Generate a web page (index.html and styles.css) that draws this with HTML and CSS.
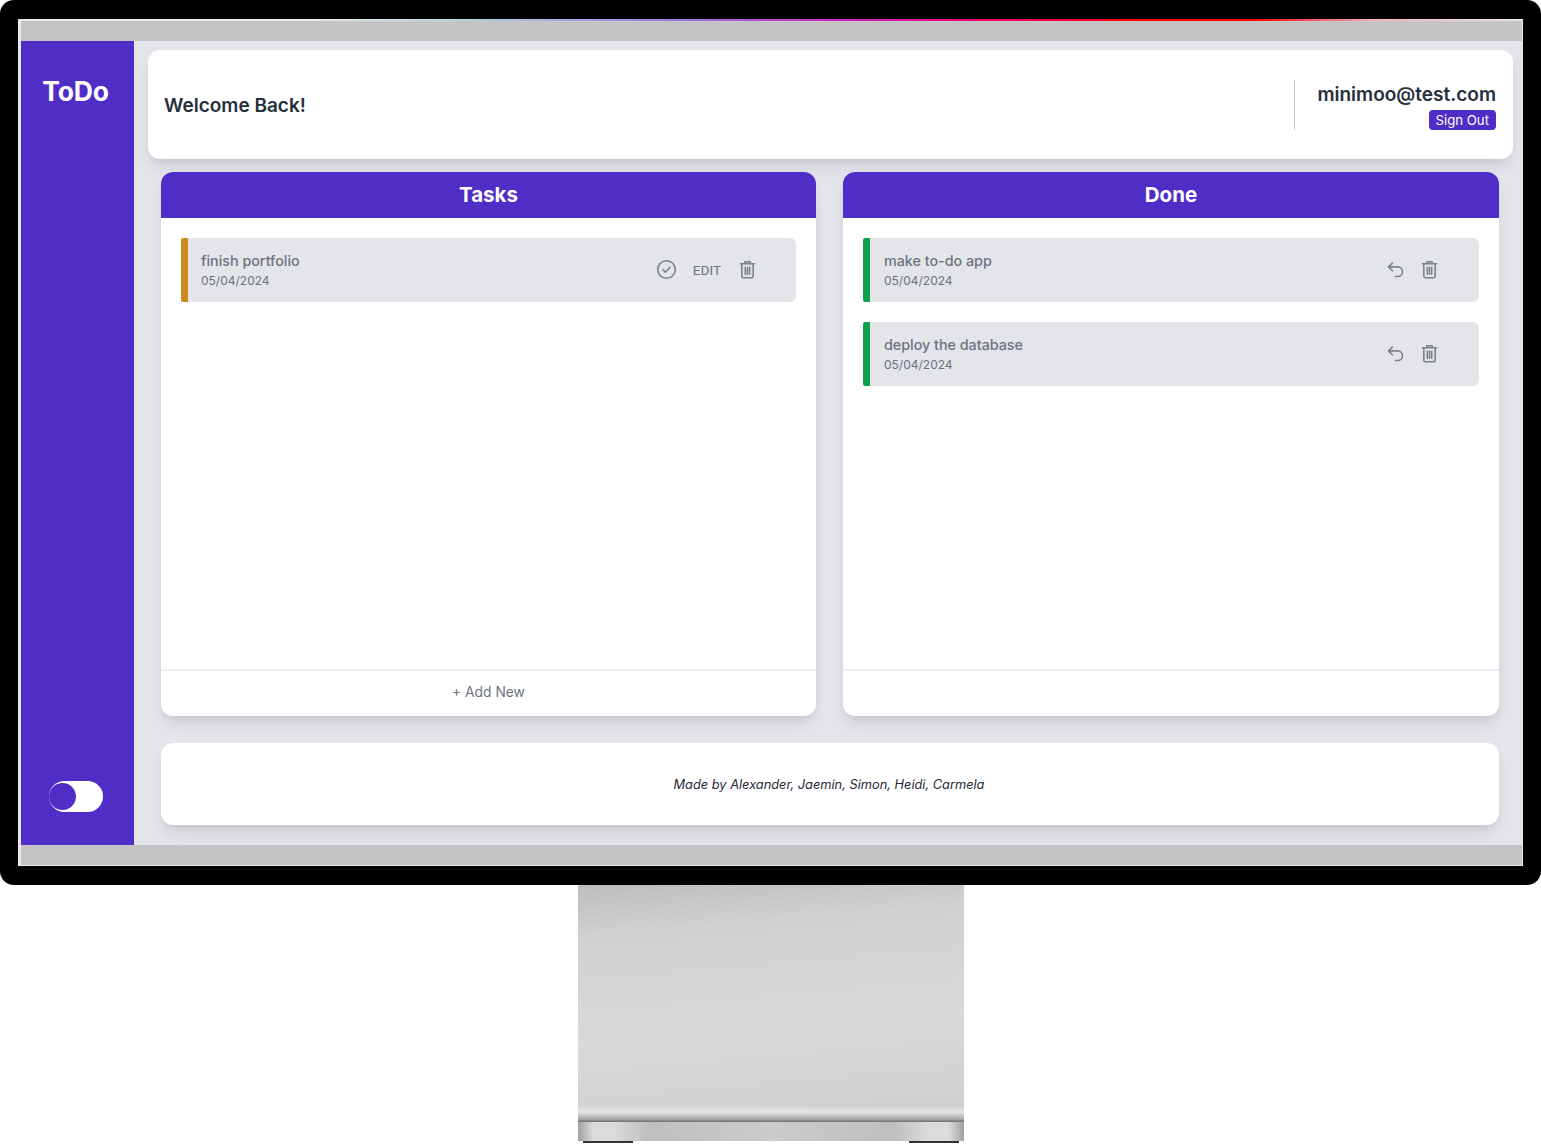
FILE: index.html
```html
<!DOCTYPE html>
<html lang="en">
<head>
    <meta charset="UTF-8">
    <meta name="viewport" content="width=device-width, initial-scale=1.0">
    <title>ToDo</title>
    <link rel="stylesheet" href="styles.css">
</head>
<body>
    <div class="monitor">
        <div class="screen">
            <div class="glow"></div>
            <div class="screen-bar"></div>
            <div class="app">
                <aside class="sidebar">
                    <div class="logo">ToDo</div>
                    <div class="toggle"><span class="knob"></span></div>
                </aside>
                <main class="content">
                    <header class="topbar">
                        <h1 class="welcome">Welcome Back!</h1>
                        <div class="account">
                            <div class="email">minimoo@test.com</div>
                            <button class="signout">Sign Out</button>
                        </div>
                    </header>

                    <div class="columns">
                        <section class="column">
                            <h2 class="column-title">Tasks</h2>
                            <div class="column-body">
                                <div class="task task-open">
                                    <div class="task-text">
                                        <div class="task-name">finish portfolio</div>
                                        <div class="task-date">05/04/2024</div>
                                    </div>
                                    <div class="task-actions actions-open">
                                        <svg class="icon" viewBox="0 0 24 24"><circle cx="12" cy="12" r="10"/><path d="M8 12.300l2.800 2.800 5.200-5.600"/></svg>
                                        <span class="edit">EDIT</span>
                                        <svg class="icon" viewBox="0 0 24 24"><path d="M4 5.500h16M9 5.500V3.200h6v2.300M5.500 5.500v14.200c0 1 .8 1.800 1.800 1.800h9.400c1 0 1.800-.8 1.800-1.800V5.500M9.500 9.500v8M12 9.500v8M14.500 9.500v8"/></svg>
                                    </div>
                                </div>
                            </div>
                            <div class="column-foot">+ Add New</div>
                        </section>

                        <section class="column">
                            <h2 class="column-title">Done</h2>
                            <div class="column-body">
                                <div class="task task-done">
                                    <div class="task-text">
                                        <div class="task-name">make to-do app</div>
                                        <div class="task-date">05/04/2024</div>
                                    </div>
                                    <div class="task-actions actions-done">
                                        <svg class="icon" viewBox="0 0 24 24"><path d="M8.500 4.500L4 9l4.500 4.500M4 9h10.500a5.500 5.500 0 0 1 0 11H12"/></svg>
                                        <svg class="icon" viewBox="0 0 24 24"><path d="M4 5.500h16M9 5.500V3.200h6v2.300M5.500 5.500v14.200c0 1 .8 1.800 1.800 1.800h9.400c1 0 1.800-.8 1.800-1.800V5.500M9.500 9.500v8M12 9.500v8M14.500 9.500v8"/></svg>
                                    </div>
                                </div>
                                <div class="task task-done">
                                    <div class="task-text">
                                        <div class="task-name">deploy the database</div>
                                        <div class="task-date">05/04/2024</div>
                                    </div>
                                    <div class="task-actions actions-done">
                                        <svg class="icon" viewBox="0 0 24 24"><path d="M8.500 4.500L4 9l4.500 4.500M4 9h10.500a5.500 5.500 0 0 1 0 11H12"/></svg>
                                        <svg class="icon" viewBox="0 0 24 24"><path d="M4 5.500h16M9 5.500V3.200h6v2.300M5.500 5.500v14.200c0 1 .8 1.800 1.800 1.800h9.400c1 0 1.800-.8 1.800-1.800V5.500M9.500 9.500v8M12 9.500v8M14.500 9.500v8"/></svg>
                                    </div>
                                </div>
                            </div>
                            <div class="column-foot"></div>
                        </section>
                    </div>

                    <footer class="credits">Made by Alexander, Jaemin, Simon, Heidi, Carmela</footer>
                </main>
            </div>
            <div class="screen-bar"></div>
        </div>
    </div>
    <div class="stand">
        <div class="stand-lip"></div>
        <div class="stand-base"></div>
        <div class="stand-feet"><span class="foot"></span><span class="foot"></span></div>
    </div>
</body>
</html>
```

FILE: styles.css
```css
* {
    box-sizing: border-box;
    margin: 0;
    padding: 0;
}

html, body {
    height: 1144px;
    overflow: hidden;
    background-color: white;
}

body {
    font-family: Inter, "Liberation Sans", sans-serif;
    color: #1f2937;
}

/* monitor frame */
.monitor {
    height: 885px;
    padding: 19px 18px;
    background-color: black;
    border-radius: 14px;
}

.screen {
    position: relative;
    height: 847px;
    width: 1505px;
    display: flex;
    flex-direction: column;
    padding: 2px 1px 1px 3px;
    background-color: #e8e8f0;
}

.glow {
    position: absolute;
    top: 0;
    left: 0;
    right: 0;
    height: 2px;
    background: linear-gradient(90deg, #e8e8e8 0%, #e8e8e8 20%, #a8d4e0 30%, #a070e0 45%, #d020c0 55%, #f00060 66%, #ff0000 75%, #ff0000 82%, #f0b0b8 90%, #e8e8e8 100%);
}

.screen-bar {
    height: 20px;
    flex-shrink: 0;
    background-color: #c4c4c4;
}

.app {
    flex: 1;
    display: flex;
    min-height: 0;
    background-color: #e4e5ea;
}

/* sidebar */
.sidebar {
    width: 113px;
    flex-shrink: 0;
    display: flex;
    flex-direction: column;
    align-items: center;
    justify-content: space-between;
    padding: 32px 4px 33px 0;
    background-color: #4f2dc7;
}

.logo {
    font-size: 26.500px;
    font-weight: 700;
    line-height: 36px;
    color: white;
    letter-spacing: -0.2px;
}

.toggle {
    width: 54px;
    height: 31px;
    margin-left: 1px;
    border-radius: 16px;
    background-color: white;
    padding: 2px 0 0;
}

.knob {
    display: block;
    width: 27px;
    height: 27px;
    border-radius: 50%;
    background-color: #4f2dc7;
}

/* main area */
.content {
    flex: 1;
    display: flex;
    flex-direction: column;
    padding: 9px 9px 20px 14px;
}

.topbar {
    height: 109px;
    flex-shrink: 0;
    display: flex;
    align-items: center;
    justify-content: space-between;
    padding: 0 17px 0 16px;
    background-color: white;
    border-radius: 12px;
    box-shadow: 0 10px 15px -3px rgba(0, 0, 0, 0.1), 0 4px 6px -2px rgba(0, 0, 0, 0.05);
}

.welcome {
    font-size: 19px;
    font-weight: 600;
    line-height: 30px;
    padding-top: 3px;
    color: #252f3d;
}

.account {
    height: 50px;
    display: flex;
    flex-direction: column;
    align-items: flex-end;
    justify-content: space-between;
    width: 202px;
    border-left: 1px solid #c9c9d0;
}

.email {
    font-size: 19px;
    font-weight: 600;
    line-height: 28px;
    padding-top: 1px;
    color: #252f3d;
}

.signout {
    height: 20px;
    padding: 0 7px;
    border: none;
    border-radius: 4px;
    font-family: Inter, sans-serif;
    font-size: 13.200px;
    color: white;
    background-color: #4f2dc7;
}

.columns {
    display: grid;
    grid-template-columns: 655px 656px;
    gap: 27px;
    margin: 13px 14px 0 13px;
    height: 544px;
    flex-shrink: 0;
}

.column {
    display: flex;
    flex-direction: column;
    background-color: white;
    border-radius: 12px;
    box-shadow: 0 10px 15px -3px rgba(0, 0, 0, 0.1), 0 4px 6px -2px rgba(0, 0, 0, 0.05);
    overflow: hidden;
}

.column-title {
    height: 46px;
    flex-shrink: 0;
    display: flex;
    align-items: center;
    justify-content: center;
    padding-bottom: 1px;
    font-size: 20.500px;
    font-weight: 700;
    color: white;
    background-color: #4f2dc7;
}

.column-body {
    flex: 1;
    display: flex;
    flex-direction: column;
    gap: 20px;
    padding: 20px;
}

.column-foot {
    height: 47px;
    flex-shrink: 0;
    display: flex;
    align-items: center;
    justify-content: center;
    padding-bottom: 3px;
    border-top: 2px solid #eceef1;
    font-size: 13.800px;
    color: #6b7280;
}

/* task rows */
.task {
    height: 64px;
    display: flex;
    align-items: center;
    justify-content: space-between;
    padding-left: 13px;
    border-left: 7px solid;
    border-radius: 2px 6px 6px 2px;
    background-color: #e4e5e9;
    color: #6b7280;
}

.task-open {
    border-left-color: #ca8a1e;
}

.task-done {
    padding-left: 14px;
    border-left-color: #0ca14a;
}

.task-name {
    font-size: 14.300px;
    font-weight: 500;
    line-height: 19px;
}

.task-date {
    font-size: 12px;
    line-height: 19px;
    padding-top: 1px;
}

.task-actions {
    display: flex;
    align-items: center;
    padding-right: 38px;
}

.actions-open {
    gap: 16px;
}

.actions-done {
    gap: 13px;
    padding-right: 39px;
}

.icon {
    width: 21px;
    height: 21px;
    margin-top: -1px;
    fill: none;
    stroke: #7b7f87;
    stroke-width: 1.800;
    stroke-linecap: round;
    stroke-linejoin: round;
}

.edit {
    font-family: Roboto, sans-serif;
    font-size: 13.600px;
    color: #6b7280;
}

.credits {
    height: 82px;
    flex-shrink: 0;
    margin: 27px 14px 0 13px;
    display: flex;
    align-items: center;
    justify-content: center;
    padding: 0 2px 0 0;
    font-size: 12.800px;
    font-style: italic;
    background-color: white;
    border-radius: 12px;
    box-shadow: 0 10px 15px -3px rgba(0, 0, 0, 0.1), 0 4px 6px -2px rgba(0, 0, 0, 0.05);
}

/* stand under the monitor */
.stand {
    width: 386px;
    height: 259px;
    margin: 0 auto;
    display: flex;
    flex-direction: column;
    background: linear-gradient(175deg, #bdbdbf 0%, #d0d1d3 18%, #d8d9db 55%, #d0d1d3 85%);
}

.stand-lip {
    flex: 1;
    background: linear-gradient(180deg, transparent calc(100% - 16px), #e4e5e6 calc(100% - 10px), #a8a8aa calc(100% - 3px), #6e6e70 100%);
}

.stand-base {
    height: 19px;
    background: linear-gradient(90deg, #a0a0a0 0%, #dcdcde 4%, #dcdcde 9%, #bfbfc1 18%, #cbcbcd 50%, #bfbfc1 82%, #dcdcde 91%, #dcdcde 96%, #a0a0a0 100%);
}

.stand-feet {
    height: 3px;
    display: flex;
    justify-content: space-between;
    padding: 0 5px;
    background-color: white;
}

.foot {
    width: 50px;
    height: 2px;
    background-color: #333;
}
```
